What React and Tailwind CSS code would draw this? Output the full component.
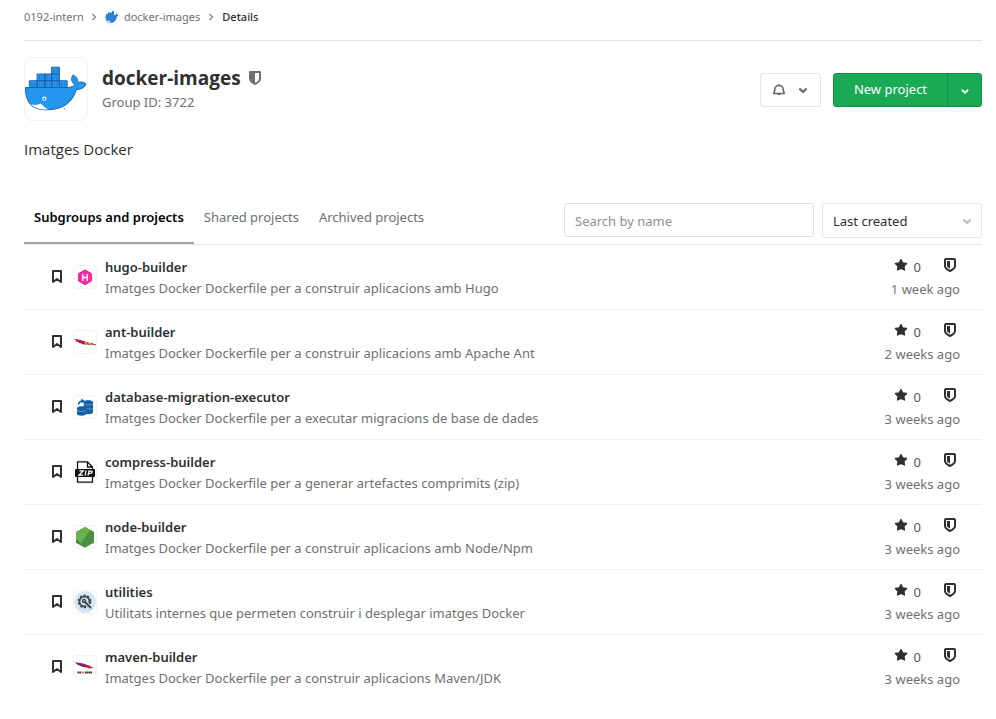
import React from "react";

function Whale({ className }) {
  return (
    <svg viewBox="0 0 64 64" className={className} aria-hidden="true">
      <g fill="#2396ed" stroke="#1f5fa8" strokeWidth="1">
        <path d="M27.500 9.500h8v7h-8zM12.500 16.500h8v7h-8zM20.500 16.500h7v7h-7zM27.500 16.500h8v7h-8zM4.500 23.500h8v7h-8zM12.500 23.500h8v7h-8zM20.500 23.500h7v7h-7zM27.500 23.500h8v7h-8zM35.500 23.500h8v7h-8z" />
        <path d="M.5 30.500H44c4-.3 6.500-1.500 7.500-3-4-3-4.300-7-1.800-10 3.500 2 5.300 4.500 4.800 8 2.500-1.200 5.500-1 8.500 1-1.500 4.500-5 6-10 6C49 45.500 40 53.500 22 53.500 7 53.500.3 46 .5 30.500z" />
      </g>
      <path d="M6 47.500c4 1.500 7 1.300 10.500-.5 1.800 2.300 4.500 4.800 8 6-8 .6-14.500-.8-18.500-5.500z" fill="#fff" />
      <circle cx="20" cy="42" r="2.200" fill="#fff" />
      <circle cx="20" cy="42" r="1" fill="#1f5fa8" />
      <path d="M7.500 26v3M10 26v3M15 19v3M18 19v3M15 26v3M18 26v3M23 19v3M25.500 19v3M23 26v3M25.500 26v3M30 12v3M33 12v3M30 19v3M33 19v3M30 26v3M33 26v3M38 26v3M41 26v3" stroke="#1f70c4" strokeWidth="0.800" />
      <circle cx="41" cy="52" r="0.900" fill="#9fc4ee" />
    </svg>
  );
}

function SmallWhale() {
  return (
    <svg viewBox="0 0 14 14" className="size-full" aria-hidden="true">
      <path d="M1 6V4h2V2.500h4V1h2v4h1.500c.5 0 .6-1.500.4-2.200 1 .5 1.300 1.200 1.300 2 .6-.1 1.200 0 1.600.3C13.300 6 12.700 6.500 12 6.500 11.300 10.500 9 13 6 13 2.500 13 .5 10.500.5 6z" fill="#2b84d3" />
      <path d="M1.500 10.500c1 .5 2 .4 3-.1.500.9 1 1.600 2 2.300-2 .2-4-.6-5-2.200z" fill="#cfe4f7" />
    </svg>
  );
}

function Chevron({ className }) {
  return (
    <svg viewBox="0 0 16 16" className={className} fill="none" stroke="currentColor" strokeWidth="2.400" strokeLinecap="round" strokeLinejoin="round" aria-hidden="true">
      <path d="M4.500 7L8 10.300 11.500 7" />
    </svg>
  );
}

function Separator() {
  return (
    <svg viewBox="0 0 8 8" className="size-2 text-[#808080]" fill="none" stroke="currentColor" strokeWidth="1.200" aria-hidden="true">
      <path d="M2.500 1l3 3-3 3" />
    </svg>
  );
}

function Bookmark() {
  return (
    <svg viewBox="0 0 16 16" className="size-4 text-[#303030]" fill="none" stroke="currentColor" strokeWidth="2" strokeLinejoin="round" aria-hidden="true">
      <path d="M4 2h8v11l-4-3-4 3z" />
    </svg>
  );
}

function Star() {
  return (
    <svg viewBox="0 0 16 16" className="size-[14px] text-[#303030]" fill="currentColor" stroke="currentColor" strokeWidth="1.500" strokeLinejoin="round" aria-hidden="true">
      <path d="M8 1.800l1.900 3.700 4.500.7-3.100 3.200.7 4.300L8 11.900l-4 1.800.7-4.300L1.600 6.200l4.500-.7z" />
    </svg>
  );
}

function Shield() {
  return (
    <svg viewBox="0 0 16 16" className="size-4 text-[#303030]" aria-hidden="true">
      <path d="M4 2h8a1 1 0 0 1 1 1v6c0 2-2 3.500-5 5-3-1.500-5-3-5-5V3a1 1 0 0 1 1-1z" fill="none" stroke="currentColor" strokeWidth="2" />
      <path d="M5 4h3v7.500C6 10.500 5 10 5 8.500z" fill="currentColor" />
    </svg>
  );
}

function GroupShield() {
  return (
    <svg viewBox="0 0 16 16" className="size-4 text-[#707070]" fill="currentColor" aria-label="Internal" role="img">
      <path fillRule="evenodd" d="M3 1h10a1 1 0 0 1 1 1v6.500c0 3-2.500 5-6 6.500-3.500-1.500-6-3.500-6-6.500V2a1 1 0 0 1 1-1zm5 2v9.800c2.500-1.200 4-2.500 4-4.400V3z" />
    </svg>
  );
}

function Bell() {
  return (
    <svg viewBox="0 0 14 14" className="size-[14px] text-[#666]" fill="none" stroke="currentColor" strokeWidth="1.600" strokeLinejoin="round" aria-hidden="true">
      <path d="M7 2.500C4.500 2.500 3 4.300 2.800 6.500L2.500 8.300l-.8 2.200h10.600l-.8-2.200-.3-1.800C11 4.300 9.500 2.500 7 2.500z" />
      <path d="M7 1.300v1.200M5.500 11.300h3" />
    </svg>
  );
}

const logos = {
  hugo: (
    <>
      <path d="M11 4l6.300 3.500v7.500L11 18.700l-6.300-3.700V7.500z" fill="#ff2ba9" stroke="#d81b8c" strokeWidth="1" />
      <path d="M8.700 8v7M13.300 8v7M8.700 11.500h4.600" stroke="#fff" strokeWidth="1.400" fill="none" />
    </>
  ),
  ant: (
    <>
      <path d="M0 8c4 .2 9 1.500 14 3.500l-1 2.500C8 13.300 3 11.500 0 8z" fill="#c0284a" />
      <path d="M3 8.800v2M6 9.500v2.800M9 10.300v3" stroke="#5c1838" strokeWidth="1" />
      <path d="M11 11c4 .2 8 1 11 2.800-4 .6-8 .4-11-.3z" fill="#e8a04a" />
      <path d="M12 11.500l4 2.500M17 12.500l5 1.500" stroke="#6d3b70" strokeWidth="0.900" />
    </>
  ),
  database: (
    <>
      <g fill="#1261a8">
        <path d="M9.500 6c0-2.500 9.500-2.500 9.500 0v10c0 2.500-6 2.800-9 1.200z" />
        <path d="M3 12c0-2.300 9-2.300 9 0v6c0 2.300-9 2.300-9 0z" />
      </g>
      <path d="M3 14.500c2 1.300 7 1.300 9 0M10 8c2 1.200 7 1.200 9 0M12.500 12.500c2 .8 5 .8 6.500 0" stroke="#8db8df" strokeWidth="0.600" fill="none" />
      <path d="M4.500 8.500C5 6 6 5 8.500 5" stroke="#1261a8" strokeWidth="1.500" fill="none" />
      <path d="M7.500 2.500l3.300 2.500-3.300 2.500z" fill="#1261a8" />
    </>
  ),
  zip: (
    <>
      <path d="M3.500 8V.8h10L18.500 6v2M3.500 15v6.200h15V15M13.500.8V6h5" fill="none" stroke="#111" strokeWidth="1.300" />
      <rect x="1" y="8" width="20" height="8" rx="1" fill="#111" />
      <path d="M5.500 9.900h3.700L5 14.100h4M12 9.500l-.9 5M14 14.700l.9-4.600h2.300c1.600 0 1.200 2.300-.5 2.300h-2" fill="none" stroke="#fff" strokeWidth="1.300" />
    </>
  ),
  node: (
    <>
      <path d="M11 1l9 5v10.500L11 21.500l-9-5V6z" fill="#58a047" />
      <path d="M11 1l5 3L6 18.700l-4-2.200V6z" fill="#6ab04f" />
      <path d="M16 3.800l4 2.200v10.500L11 21.500l-4.500-2.600z" fill="#4c9141" />
      <path d="M2 13l9 8.500-9-5z" fill="#3e8438" />
    </>
  ),
  utilities: (
    <>
      <circle cx="11" cy="11" r="10.800" fill="#d3e6f1" />
      <circle cx="10.500" cy="10.500" r="5.800" fill="none" stroke="#3b424d" strokeWidth="2" strokeDasharray="2.400 1.244" />
      <circle cx="10.500" cy="10.500" r="4.800" fill="none" stroke="#3b424d" strokeWidth="1.400" />
      <path d="M11 11l5 5" stroke="#d3e6f1" strokeWidth="3.800" />
      <path d="M10.500 10.500l6 6" stroke="#3b424d" strokeWidth="2" strokeLinecap="round" />
      <circle cx="10" cy="10" r="1.600" fill="none" stroke="#3b424d" strokeWidth="1.300" />
    </>
  ),
  maven: (
    <>
      <path d="M1 6.500c6 0 12 1.700 17.500 5-6 .8-13-.8-17.500-5z" fill="#b01f5e" />
      <path d="M1 6.500c5 1 9 2.700 12 4.500-4-.2-9-1.500-12-4.500z" fill="#5c2a79" />
      <path d="M12 9.500l8.500 2.500-6 .5z" fill="#d22128" />
      <path d="M3.500 16.500h4M11 16.500h7" stroke="#333" strokeWidth="2.200" strokeDasharray="1.700 .3" />
      <path d="M8 16.500h2.200" stroke="#e8762d" strokeWidth="2.200" />
    </>
  ),
};

const projects = [
  ["hugo", "hugo-builder", "Imatges Docker Dockerfile per a construir aplicacions amb Hugo", "1 week ago"],
  ["ant", "ant-builder", "Imatges Docker Dockerfile per a construir aplicacions amb Apache Ant", "2 weeks ago"],
  ["database", "database-migration-executor", "Imatges Docker Dockerfile per a executar migracions de base de dades", "3 weeks ago"],
  ["zip", "compress-builder", "Imatges Docker Dockerfile per a generar artefactes comprimits (zip)", "3 weeks ago"],
  ["node", "node-builder", "Imatges Docker Dockerfile per a construir aplicacions amb Node/Npm", "3 weeks ago"],
  ["utilities", "utilities", "Utilitats internes que permeten construir i desplegar imatges Docker", "3 weeks ago"],
  ["maven", "maven-builder", "Imatges Docker Dockerfile per a construir aplicacions Maven/JDK", "3 weeks ago"],
];

function ProjectRow({ logo, name, description, updated }) {
  return (
    <li className="flex h-[65px] items-start border-b border-[#f0f0f0] pt-3 pr-[22px] pl-[25px] last:border-transparent">
      <div className="flex h-10 items-center gap-2">
        <Bookmark />
        <span className="size-6 shrink-0 overflow-hidden rounded-sm border border-[#f2f2f2]">
          <svg viewBox="0 0 22 22" className="size-full" aria-hidden="true">{logos[logo]}</svg>
        </span>
      </div>
      <div className="ml-2 min-w-0 flex-1">
        <h2 className="leading-[21px] font-semibold text-[#303030]"><a href="#">{name}</a></h2>
        <p className="truncate leading-[21px] text-[#707070]">{description}</p>
      </div>
      <div className="flex shrink-0 flex-col items-end">
        <div className="flex h-[21px] text-[#555]">
          <span className="pt-px"><Star /></span>
          <span className="mr-[21px] ml-1.5 leading-[21px]">0</span>
          <span className="mr-0.5"><Shield /></span>
        </div>
        <time className="leading-[22px] text-[#707070]">{updated}</time>
      </div>
    </li>
  );
}

export default function App() {
  return (
    <main className="bg-white pr-[14px] pl-6 font-['Noto_Sans','Open_Sans',sans-serif] text-[13px] text-[#303030]">
      <nav aria-label="Breadcrumb" className="flex h-[41px] items-center border-b border-[#e5e5e5] pb-1.5 text-[11px] text-[#707070]">
        <a href="#">0192-intern</a>
        <span className="mx-[6px]"><Separator /></span>
        <a href="#" className="flex items-center gap-1">
          <span className="size-4 overflow-hidden rounded-full border border-[#eee]"><SmallWhale /></span>
          docker-images
        </a>
        <span className="mx-[7px]"><Separator /></span>
        <a href="#" className="font-medium text-[#303030]">Details</a>
      </nav>

      <header className="mt-4 flex h-16 items-center">
        <span className="size-16 overflow-hidden rounded-lg border border-[#f2f2f2]"><Whale className="size-full" /></span>
        <div className="ml-[14px] flex-1 pt-0.5">
          <div className="flex items-center gap-1.5">
            <h1 className="font-['Open_Sans','Noto_Sans',sans-serif] text-[19px] leading-6 font-bold">docker-images</h1>
            <GroupShield />
          </div>
          <p className="leading-6 text-[#707070]">Group ID: 3722</p>
        </div>
        <div className="flex gap-3 pt-0.5">
          <button type="button" aria-label="Notification setting" className="flex h-[34px] w-[61px] items-center justify-center gap-[10px] rounded-[3px] border border-[#e5e5e5] text-[#666]">
            <Bell />
            <Chevron className="size-[14px]" />
          </button>
          <div className="flex h-[34px] rounded-[3px] border border-[#168f48] bg-[#1aaa55] text-white">
            <button type="button" className="w-[113px]">New project</button>
            <button type="button" aria-label="More new items" className="flex w-[34px] items-center justify-center border-l border-[#168f48] pt-0.5">
              <Chevron className="size-3" />
            </button>
          </div>
        </div>
      </header>

      <p className="mt-4 font-['Open_Sans','Noto_Sans',sans-serif] text-[15px] leading-6">Imatges Docker</p>

      <div className="mt-[42px] flex border-b border-[#e5e5e5]">
        <nav aria-label="Projects" className="flex flex-1 text-[#707070]">
          <a href="#" aria-current="page" className="border-b-2 border-[#a5a5a5] px-[10px] pt-1 pb-[14px] leading-[21px] font-semibold text-black">Subgroups and projects</a>
          <a href="#" className="px-[10px] pt-1 leading-[21px]">Shared projects</a>
          <a href="#" className="px-[10px] pt-1 leading-[21px]">Archived projects</a>
        </nav>
        <input type="search" aria-label="Search by name" placeholder="Search by name" className="h-[34px] w-[250px] rounded-[3px] border border-[#dfdfdf] px-[10px] pt-0.5 placeholder:text-[#8f8f8f]" />
        <div className="relative ml-2 h-[35px] w-40">
          <select aria-label="Sort by" className="size-full appearance-none rounded-[3px] border border-[#e5e5e5] bg-white px-[10px] pt-0.5">
            <option>Last created</option>
          </select>
          <Chevron className="pointer-events-none absolute top-[11px] right-2 size-[14px] text-[#bbb]" />
        </div>
      </div>

      <ul>
        {projects.map(([logo, name, description, updated]) => (
          <ProjectRow key={name} logo={logo} name={name} description={description} updated={updated} />
        ))}
      </ul>
    </main>
  );
}
